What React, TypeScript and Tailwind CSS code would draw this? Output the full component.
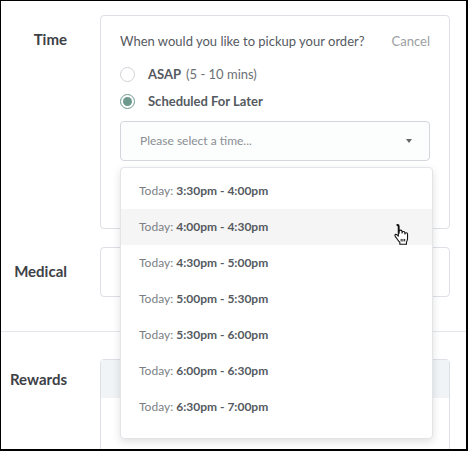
import { useState } from "react";

const times = [
  "3:30pm - 4:00pm",
  "4:00pm - 4:30pm",
  "4:30pm - 5:00pm",
  "5:00pm - 5:30pm",
  "5:30pm - 6:00pm",
  "6:00pm - 6:30pm",
  "6:30pm - 7:00pm",
  "7:00pm - 7:30pm",
];

function HandCursor() {
  return (
    <svg width="19" height="22" viewBox="0 0 17 20" className="absolute left-[391px] top-[222px]">
      <path
        d="M5 1.5c.8 0 1.3.6 1.3 1.4v6.3l.1-1.4c0-.8.6-1.3 1.3-1.3s1.3.6 1.3 1.3v1.2c0-.8.6-1.3 1.3-1.3s1.3.6 1.3 1.3v1c0-.7.6-1.2 1.2-1.2.7 0 1.2.6 1.2 1.300v3.8c0 1.6-.4 2.6-1 3.6v1.8H7v-1.7c-1-1-2.2-2.5-3.3-4.2-.6-.9-1.4-1.600-1.200-2.400.2-.7 1-.9 1.6-.4l1.5 1.4V2.9C3.6 2.1 4.2 1.5 5 1.5z"
        fill="#fff"
        stroke="#111"
        strokeWidth="1"
        strokeLinejoin="round"
      />
      <path d="M8.2 14.5v2.3M9.8 14.5v2.3M11.4 14.5v2.3" stroke="#111" strokeWidth="0.9" />
    </svg>
  );
}

export default function App() {
  const [choice, setChoice] = useState("later");
  return (
    <div
      className="relative w-[468px] h-[451px] overflow-hidden bg-white border-t border-l border-r-2 border-b-2 border-black text-[#3d4146]"
      style={{ fontFamily: "Lato, 'Liberation Sans', sans-serif" }}
    >
      {/* Time */}
      <div className="flex pt-[14px]">
        <div className="w-[66px] shrink-0 pt-[15px] text-right text-[15px] font-bold leading-[18px]">Time</div>
        <div className="ml-[33px] w-[350px] h-[214px] rounded-[4px] border border-[#dde0e5] px-[19px] pt-[16px]">
          <div className="flex items-center justify-between text-[13px] leading-[18px]">
            <span className="text-[#555a5f]">When would you like to pickup your order?</span>
            <span className="text-[#9a9ea3]">Cancel</span>
          </div>
          <button
            type="button"
            onClick={() => setChoice("asap")}
            className="mt-[15px] flex items-center gap-[13px] text-[13px] leading-[18px]"
          >
            <span className={`flex h-[15px] w-[15px] items-center justify-center rounded-full border ${choice === "asap" ? "border-[#6e9a8d]" : "border-[#cfd2d6]"}`}>
              {choice === "asap" && <span className="h-[9px] w-[9px] rounded-full bg-[#6e9a8d]" />}
            </span>
            <span>
              <b className="font-bold text-[#555a5f]">ASAP</b>
              <span className="ml-[5px] text-[#6b7075]">(5 - 10 mins)</span>
            </span>
          </button>
          <button
            type="button"
            onClick={() => setChoice("later")}
            className="mt-[9px] flex items-center gap-[13px] text-[13px] leading-[18px]"
          >
            <span className={`flex h-[15px] w-[15px] items-center justify-center rounded-full border ${choice === "later" ? "border-[#6e9a8d]" : "border-[#cfd2d6]"}`}>
              {choice === "later" && <span className="h-[9px] w-[9px] rounded-full bg-[#6e9a8d]" />}
            </span>
            <b className="font-bold text-[#555a5f]">Scheduled For Later</b>
          </button>
          <div className="mt-[11px] flex h-[40px] items-center justify-between rounded-[4px] border border-[#d3d6db] bg-[#fcfdfd] pl-[19px] pr-[17px] text-[12px] text-[#8a8e93]">
            <span>Please select a time...</span>
            <span className="h-0 w-0 border-l-[3px] border-r-[3px] border-t-[4px] border-l-transparent border-r-transparent border-t-[#666]" />
          </div>
        </div>
      </div>

      {/* Medical */}
      <div className="flex pt-[18px]">
        <div className="w-[66px] shrink-0 pt-[15px] text-right text-[15px] font-bold leading-[18px]">Medical</div>
        <div className="ml-[33px] h-[50px] w-[350px] rounded-[4px] border border-[#dde0e5]" />
      </div>

      <div className="mt-[34px] border-t border-[#e3e6ea]" />

      {/* Rewards */}
      <div className="flex pt-[27px]">
        <div className="w-[66px] shrink-0 pt-[11px] text-right text-[15px] font-bold leading-[18px]">Rewards</div>
        <div className="ml-[33px] h-[120px] w-[350px] rounded-t-[4px] border border-[#dde0e5]">
          <div className="h-[38px] bg-[#f1f4f7]" />
        </div>
      </div>

      {/* Dropdown */}
      <div className="absolute left-[119px] top-[166px] h-[272px] w-[313px] overflow-hidden rounded-[4px] border border-[#e2e4e8] bg-white pt-[5px] shadow-[0_3px_8px_rgba(0,0,0,0.12)]">
        {times.map((t, i) => (
          <div
            key={t}
            className={`flex h-[36px] items-center pl-[18px] text-[12px] ${i === 1 ? "bg-[#f5f5f5]" : ""} ${i === 7 ? "opacity-20" : ""}`}
          >
            <span className="text-[#7b7f84]">Today:&nbsp;</span>
            <span className="font-bold text-[#555a5f]">{t}</span>
          </div>
        ))}
      </div>
      <HandCursor />
    </div>
  );
}
